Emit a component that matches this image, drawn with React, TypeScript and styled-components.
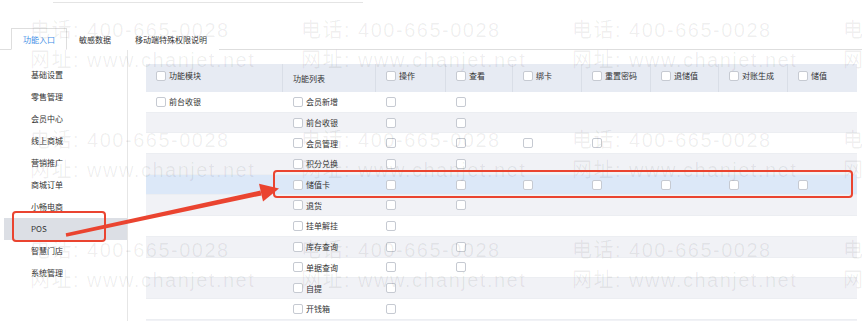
import React from "react";
import styled, { createGlobalStyle } from "styled-components";

const Global = createGlobalStyle`
  html, body { margin: 0; padding: 0; background: #fff; }
  body { overflow: hidden; font-family: "Noto Sans CJK SC", "Noto Sans", sans-serif; }
  * { box-sizing: border-box; }
`;

const Page = styled.div`
  position: relative;
  width: 862px;
  height: 321px;
  overflow: hidden;
  background: #fff;
  font-size: 8px;
  color: #333;
`;

const TopRule = styled.div`
  margin: 2px 0 0 53px;
  width: 310px;
  height: 1px;
  background: #e4e4e4;
`;

const TabBar = styled.div`
  margin-top: 25px;
  height: 22px;
  display: flex;
  align-items: stretch;
  padding-left: 11px;
  border-bottom: 1px solid #dedede;
`;

const Tab = styled.div<{ $active?: boolean }>`
  display: flex;
  align-items: center;
  padding: 0 11px;
  margin-bottom: -1px;
  border: 1px solid ${(p) => (p.$active ? "#dedede" : "transparent")};
  border-bottom-color: ${(p) => (p.$active ? "#fff" : "transparent")};
  background: #fff;
  color: ${(p) => (p.$active ? "#3f8fe6" : "#333")};
  white-space: nowrap;
`;

const Main = styled.div`
  display: flex;
  height: 271px;
`;

const Sidebar = styled.div`
  width: 128px;
  flex: none;
  padding: 13.5px 0 0 4px;
  border-right: 1px solid #e6e6e6;
`;

const MenuItem = styled.div<{ $active?: boolean }>`
  height: 22px;
  display: flex;
  align-items: center;
  padding-left: 27px;
  background: ${(p) => (p.$active ? "#dcdfe5" : "transparent")};
  color: #333;
`;

const TableArea = styled.div`
  padding: 14px 0 0 18px;
  flex: none;
`;

const cols = "137px 93px 70px 67px 69px 69px 68px 69px 69px";

const HeadRow = styled.div`
  display: grid;
  grid-template-columns: ${cols};
  height: 28px;
  background: #e7ebf3;
`;

const HeadCell = styled.div<{ $check?: boolean; $last?: boolean }>`
  display: flex;
  align-items: center;
  gap: 3px;
  padding-left: 10px;
  padding-bottom: ${(p) => (p.$check ? "5px" : "0")};
  border-right: ${(p) => (p.$last ? "none" : "1px solid #d9dee7")};
  color: #333;
  white-space: nowrap;
`;

const Row = styled.div<{ $tone: "white" | "gray" | "hl" }>`
  display: grid;
  grid-template-columns: ${cols};
  height: 20.7px;
  background: ${(p) =>
    p.$tone === "hl" ? "#dce8f8" : p.$tone === "gray" ? "#f1f2f6" : "#fff"};
  border-bottom: 1px solid #eceef2;
`;

const Cell = styled.div`
  display: flex;
  align-items: center;
  gap: 3px;
  padding-left: 10px;
  color: #333;
  white-space: nowrap;
`;

const Box = styled.span`
  display: inline-block;
  width: 10px;
  height: 10px;
  flex: none;
  border: 1px solid #c6cad2;
  border-radius: 2px;
  background: #fff;
`;

const Watermark = styled.div`
  position: absolute;
  inset: 0;
  pointer-events: none;
  padding: 15px 0 0 30px;
  display: grid;
  grid-template-columns: repeat(4, 271px);
  grid-auto-rows: 110px;
`;

const Mark = styled.div`
  font-family: "Liberation Sans", "Noto Sans CJK SC", sans-serif;
  font-size: 20px;
  line-height: 30px;
  letter-spacing: 1.5px;
  color: rgba(0, 0, 0, 0.065);
  white-space: nowrap;
`;

const RedBox = styled.div<{ $l: number; $t: number; $w: number; $h: number }>`
  position: absolute;
  left: ${(p) => p.$l}px;
  top: ${(p) => p.$t}px;
  width: ${(p) => p.$w}px;
  height: ${(p) => p.$h}px;
  border: 2px solid #ea4430;
  border-radius: 4px;
  pointer-events: none;
`;

const ArrowLayer = styled.svg`
  position: absolute;
  left: 0;
  top: 0;
  pointer-events: none;
`;

const menu = [
  "基础设置",
  "零售管理",
  "会员中心",
  "线上商城",
  "营销推广",
  "商城订单",
  "小畅电商",
  "POS",
  "智慧门店",
  "系统管理",
];

const heads = ["操作", "查看", "绑卡", "重置密码", "退储值", "对账生成", "储值"];

const rows: { name: string; n: number; mod?: string }[] = [
  { name: "会员新增", n: 2, mod: "前台收银" },
  { name: "前台收银", n: 2 },
  { name: "会员管理", n: 4 },
  { name: "积分兑换", n: 2 },
  { name: "储值卡", n: 7 },
  { name: "退货", n: 2 },
  { name: "挂单解挂", n: 1 },
  { name: "库存查询", n: 2 },
  { name: "单据查询", n: 2 },
  { name: "自提", n: 1 },
  { name: "开钱箱", n: 1 },
  { name: "", n: 0 },
];

export default function App() {
  return (
    <Page>
      <Global />
      <TopRule />
      <TabBar>
        <Tab $active>功能入口</Tab>
        <Tab>敏感数据</Tab>
        <Tab>移动端特殊权限说明</Tab>
      </TabBar>
      <Main>
        <Sidebar>
          {menu.map((m) => (
            <MenuItem key={m} $active={m === "POS"}>
              {m}
            </MenuItem>
          ))}
        </Sidebar>
        <TableArea>
          <HeadRow>
            <HeadCell $check>
              <Box />
              功能模块
            </HeadCell>
            <HeadCell>功能列表</HeadCell>
            {heads.map((h, i) => (
              <HeadCell key={h} $check $last={i === heads.length - 1}>
                <Box />
                {h}
              </HeadCell>
            ))}
          </HeadRow>
          {rows.map((r, i) => (
            <Row
              key={i}
              $tone={i === 4 ? "hl" : i % 2 === 1 ? "gray" : "white"}
            >
              <Cell>
                {r.mod && (
                  <>
                    <Box />
                    {r.mod}
                  </>
                )}
              </Cell>
              <Cell>
                {r.name && (
                  <>
                    <Box />
                    {r.name}
                  </>
                )}
              </Cell>
              {Array.from({ length: 7 }).map((_, j) => (
                <Cell key={j}>{j < r.n && <Box />}</Cell>
              ))}
            </Row>
          ))}
        </TableArea>
      </Main>

      <Watermark>
        {Array.from({ length: 12 }).map((_, i) => (
          <div key={i}>
            <Mark>电话: 400-665-0028</Mark>
            <Mark>网址: www.chanjet.net</Mark>
          </div>
        ))}
      </Watermark>

      <RedBox $l={12} $t={211} $w={94} $h={31} />
      <RedBox $l={273} $t={170} $w={580} $h={28} />
      <ArrowLayer width="862" height="321" viewBox="0 0 862 321">
        <polygon
          points="65.7,233.2 66.3,236.8 261.6,195.4 260.4,190.6"
          fill="#ea4430"
        />
        <polygon points="279,188.5 263,201.4 259,183.8" fill="#ea4430" />
      </ArrowLayer>
    </Page>
  );
}
